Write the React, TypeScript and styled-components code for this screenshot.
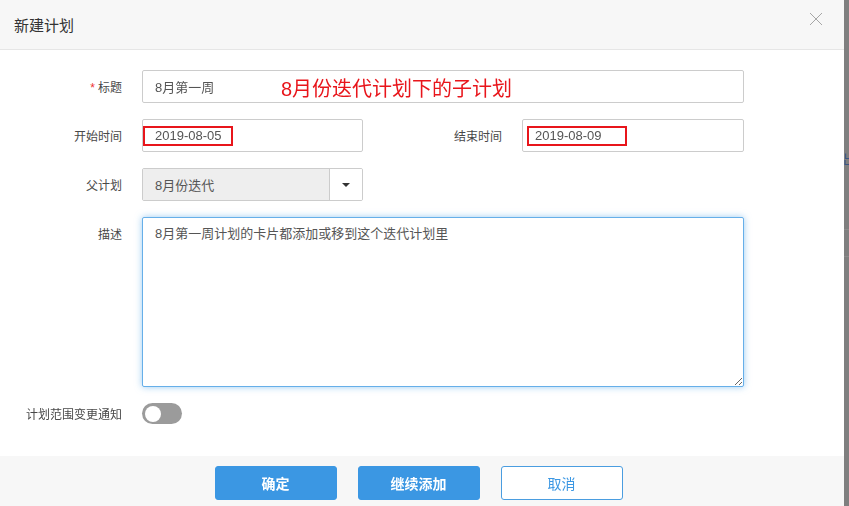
import React from 'react';
import styled, { createGlobalStyle } from 'styled-components';

const GlobalStyle = createGlobalStyle`
  html, body {
    margin: 0;
    padding: 0;
    background: #7f7f7f;
  }
  body {
    font-family: "Liberation Sans", "Noto Sans CJK SC", sans-serif;
    color: #333;
  }
  * {
    box-sizing: border-box;
  }
`;

const Page = styled.div`
  display: flex;
  width: 849px;
  height: 506px;
  overflow: hidden;
`;

const Dialog = styled.div`
  width: 844px;
  height: 506px;
  display: flex;
  flex-direction: column;
  background: #fff;
`;

const Backdrop = styled.div`
  flex: 1;
  background: #7f7f7f;
  overflow: hidden;
  padding-top: 151px;
  display: flex;
  flex-direction: column;
`;

const BehindText = styled.span`
  font-size: 14px;
  line-height: 16px;
  color: #2b4c86;
  white-space: nowrap;
  margin-left: -1px;
  opacity: 0.8;
`;

const BehindLine = styled.div<{ $top: number }>`
  height: 1px;
  margin-top: ${(p) => p.$top}px;
  background: #8c8c8c;
`;

const Header = styled.div`
  height: 50px;
  flex-shrink: 0;
  display: flex;
  align-items: center;
  justify-content: space-between;
  padding: 0 21px 0 14px;
  background: #f7f7f7;
  border-bottom: 1px solid #e6e6e6;
`;

const Title = styled.h4`
  margin: 0;
  font-size: 15px;
  font-weight: normal;
  color: #333;
`;

const CloseButton = styled.button`
  align-self: flex-start;
  margin-top: 12px;
  width: 14px;
  height: 14px;
  padding: 0;
  border: none;
  background: none;
  cursor: pointer;
  display: flex;
`;

const Body = styled.div`
  flex: 1;
  display: flex;
  flex-direction: column;
  gap: 16px;
  padding-top: 20px;
`;

const Row = styled.div<{ $top?: boolean }>`
  display: flex;
  align-items: ${(p) => (p.$top ? 'flex-start' : 'center')};
  gap: 17px;
`;

const Field = styled.div<{ $top?: boolean }>`
  display: flex;
  align-items: ${(p) => (p.$top ? 'flex-start' : 'center')};
`;

const Label = styled.label<{ $top?: boolean }>`
  width: 122px;
  flex-shrink: 0;
  margin-right: 20px;
  text-align: right;
  font-size: 12px;
  color: #484848;
  white-space: nowrap;
  padding-top: ${(p) => (p.$top ? '8px' : '0')};
`;

const Required = styled.span`
  color: #e33;
  margin-right: 3px;
`;

const InputBox = styled.div<{ $width: number }>`
  position: relative;
  width: ${(p) => p.$width}px;
  height: 33px;
`;

const TextInput = styled.input`
  width: 100%;
  height: 100%;
  border: 1px solid #ccc;
  border-radius: 2px;
  padding: 0 12px;
  font-family: inherit;
  font-size: 13px;
  color: #555;
  background: #fff;
  outline: none;
`;

const Annotation = styled.span`
  position: absolute;
  left: 139px;
  top: 50%;
  transform: translateY(-50%);
  font-size: 20px;
  color: #e8151b;
  pointer-events: none;
  white-space: nowrap;
`;

const HighlightBox = styled.span<{ $left: number; $width: number }>`
  position: absolute;
  left: ${(p) => p.$left}px;
  top: 7px;
  width: ${(p) => p.$width}px;
  height: 20px;
  border: 2px solid #e8151b;
  pointer-events: none;
`;

const Select = styled.div`
  width: 221px;
  height: 33px;
  display: flex;
  border: 1px solid #ccc;
  border-radius: 2px;
  overflow: hidden;
`;

const SelectValue = styled.div`
  flex: 1;
  display: flex;
  align-items: center;
  padding: 0 12px;
  background: #eee;
  font-size: 13px;
  color: #555;
  border-right: 1px solid #ccc;
`;

const SelectButton = styled.button`
  width: 32px;
  border: none;
  background: #fff;
  padding: 0;
  display: flex;
  align-items: center;
  justify-content: center;
`;

const Caret = styled.span`
  width: 0;
  height: 0;
  border-left: 4px solid transparent;
  border-right: 4px solid transparent;
  border-top: 4px solid #333;
`;

const TextArea = styled.textarea`
  width: 602px;
  height: 170px;
  padding: 6px 12px;
  border: 1px solid #66afe9;
  border-radius: 2px;
  box-shadow: 0 0 7px rgba(102, 175, 233, 0.65);
  font-family: inherit;
  font-size: 13px;
  line-height: 19px;
  color: #555;
  caret-color: #333;
  outline: none;
  resize: both;
`;

const Toggle = styled.button<{ $on: boolean }>`
  width: 40px;
  height: 21px;
  padding: 0;
  border: none;
  border-radius: 11px;
  background: ${(p) => (p.$on ? '#3b97e3' : '#9b9b9b')};
  display: flex;
  align-items: center;
  justify-content: ${(p) => (p.$on ? 'flex-end' : 'flex-start')};
  padding: 0 3px;
  cursor: pointer;
`;

const Knob = styled.span`
  width: 16px;
  height: 16px;
  border-radius: 50%;
  background: #fff;
`;

const Footer = styled.div`
  height: 50px;
  flex-shrink: 0;
  background: #f7f7f7;
  display: flex;
  justify-content: center;
  gap: 21px;
  padding-top: 10px;
  padding-right: 7px;
`;

const Button = styled.button<{ $primary?: boolean }>`
  width: 122px;
  height: 34px;
  border-radius: 3px;
  border: 1px solid ${(p) => (p.$primary ? '#3b97e3' : '#4a9de0')};
  background: ${(p) => (p.$primary ? '#3b97e3' : '#fff')};
  color: ${(p) => (p.$primary ? '#fff' : '#3b97e3')};
  font-family: inherit;
  font-size: 14px;
  font-weight: ${(p) => (p.$primary ? 600 : 400)};
  cursor: pointer;
`;

const App: React.FC = () => {
  return (
    <Page>
      <GlobalStyle />
      <Dialog>
        <Header>
          <Title>新建计划</Title>
          <CloseButton aria-label="关闭">
            <svg width="14" height="14" viewBox="0 0 14 14">
              <path d="M1 1 L13 13 M13 1 L1 13" stroke="#a6a6a6" strokeWidth="1" fill="none" />
            </svg>
          </CloseButton>
        </Header>
        <Body>
          <Row>
            <Field>
              <Label>
                <Required>*</Required>标题
              </Label>
              <InputBox $width={602}>
                <TextInput defaultValue="8月第一周" />
                <Annotation>8月份迭代计划下的子计划</Annotation>
              </InputBox>
            </Field>
          </Row>
          <Row>
            <Field>
              <Label>开始时间</Label>
              <InputBox $width={221}>
                <TextInput defaultValue="2019-08-05" />
                <HighlightBox $left={1} $width={90} />
              </InputBox>
            </Field>
            <Field>
              <Label>结束时间</Label>
              <InputBox $width={222}>
                <TextInput defaultValue="2019-08-09" />
                <HighlightBox $left={5} $width={100} />
              </InputBox>
            </Field>
          </Row>
          <Row>
            <Field>
              <Label>父计划</Label>
              <Select>
                <SelectValue>8月份迭代</SelectValue>
                <SelectButton aria-label="展开">
                  <Caret />
                </SelectButton>
              </Select>
            </Field>
          </Row>
          <Row $top>
            <Field $top>
              <Label $top>描述</Label>
              <TextArea autoFocus defaultValue="8月第一周计划的卡片都添加或移到这个迭代计划里" />
            </Field>
          </Row>
          <Row>
            <Field>
              <Label>计划范围变更通知</Label>
              <Toggle $on={false} aria-label="计划范围变更通知">
                <Knob />
              </Toggle>
            </Field>
          </Row>
        </Body>
        <Footer>
          <Button $primary>确定</Button>
          <Button $primary>继续添加</Button>
          <Button>取消</Button>
        </Footer>
      </Dialog>
      <Backdrop>
        <BehindText>出</BehindText>
        <BehindLine $top={62} />
        <BehindLine $top={26} />
      </Backdrop>
    </Page>
  );
};

export default App;
